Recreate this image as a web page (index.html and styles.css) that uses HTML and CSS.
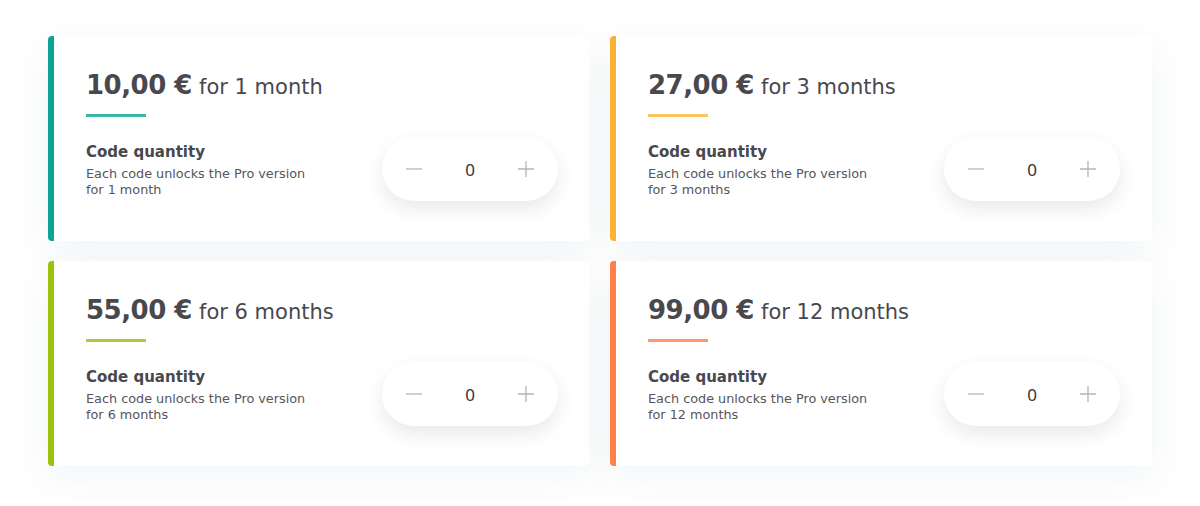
FILE: index.html
```html
<!DOCTYPE html>
<html>
<head>
<meta charset="utf-8">
<link rel="stylesheet" href="styles.css">
</head>
<body>
<div class="grid">
  <div class="card teal">
    <div class="title"><span class="price">10,00 €</span> <span class="period">for 1 month</span></div>
    <div class="bar"></div>
    <div class="row">
      <div class="info">
        <div class="label">Code quantity</div>
        <div class="desc">Each code unlocks the Pro version<br>for 1 month</div>
      </div>
      <div class="stepper">
        <span class="btn"><svg width="16" height="16" viewBox="0 0 16 16"><path d="M0 8H16" stroke="#b5b5b8" stroke-width="1.3"/></svg></span>
        <span class="val">0</span>
        <span class="btn"><svg width="16" height="16" viewBox="0 0 16 16"><path d="M0 8H16M8 0V16" stroke="#b5b5b8" stroke-width="1.3"/></svg></span>
      </div>
    </div>
  </div>
  <div class="card yellow">
    <div class="title"><span class="price">27,00 €</span> <span class="period">for 3 months</span></div>
    <div class="bar"></div>
    <div class="row">
      <div class="info">
        <div class="label">Code quantity</div>
        <div class="desc">Each code unlocks the Pro version<br>for 3 months</div>
      </div>
      <div class="stepper">
        <span class="btn"><svg width="16" height="16" viewBox="0 0 16 16"><path d="M0 8H16" stroke="#b5b5b8" stroke-width="1.3"/></svg></span>
        <span class="val">0</span>
        <span class="btn"><svg width="16" height="16" viewBox="0 0 16 16"><path d="M0 8H16M8 0V16" stroke="#b5b5b8" stroke-width="1.3"/></svg></span>
      </div>
    </div>
  </div>
  <div class="card green">
    <div class="title"><span class="price">55,00 €</span> <span class="period">for 6 months</span></div>
    <div class="bar"></div>
    <div class="row">
      <div class="info">
        <div class="label">Code quantity</div>
        <div class="desc">Each code unlocks the Pro version<br>for 6 months</div>
      </div>
      <div class="stepper">
        <span class="btn"><svg width="16" height="16" viewBox="0 0 16 16"><path d="M0 8H16" stroke="#b5b5b8" stroke-width="1.3"/></svg></span>
        <span class="val">0</span>
        <span class="btn"><svg width="16" height="16" viewBox="0 0 16 16"><path d="M0 8H16M8 0V16" stroke="#b5b5b8" stroke-width="1.3"/></svg></span>
      </div>
    </div>
  </div>
  <div class="card orange">
    <div class="title"><span class="price">99,00 €</span> <span class="period">for 12 months</span></div>
    <div class="bar"></div>
    <div class="row">
      <div class="info">
        <div class="label">Code quantity</div>
        <div class="desc">Each code unlocks the Pro version<br>for 12 months</div>
      </div>
      <div class="stepper">
        <span class="btn"><svg width="16" height="16" viewBox="0 0 16 16"><path d="M0 8H16" stroke="#b5b5b8" stroke-width="1.3"/></svg></span>
        <span class="val">0</span>
        <span class="btn"><svg width="16" height="16" viewBox="0 0 16 16"><path d="M0 8H16M8 0V16" stroke="#b5b5b8" stroke-width="1.3"/></svg></span>
      </div>
    </div>
  </div>
</div>
</body>
</html>
```

FILE: styles.css
```css
html, body {
  margin: 0;
  padding: 0;
  background: #ffffff;
}
body {
  font-family: "DejaVu Sans", "Noto Sans", sans-serif;
  color: #48484d;
}
.grid {
  display: grid;
  grid-template-columns: 542px 542px;
  grid-auto-rows: 205px;
  gap: 20px;
  padding: 36px 48px;
}
.card {
  background: #fff;
  border-radius: 4px;
  border-left: 6px solid #0fa394;
  box-shadow: 0 12px 40px rgba(40, 60, 100, 0.06);
  padding: 32px 32px 0 32px;
  display: flex;
  flex-direction: column;
}
.card.teal { border-left-color: #0fa394; }
.card.yellow { border-left-color: #fbb232; }
.card.green { border-left-color: #9bc30e; }
.card.orange { border-left-color: #ff8147; }
.teal .bar { background: #3cb5a9; }
.yellow .bar { background: #fcc35c; }
.green .bar { background: #a9cb3a; }
.orange .bar { background: #ff976a; }
.title {
  line-height: 34px;
  white-space: nowrap;
}
.price {
  font-size: 26px;
  font-weight: 700;
  letter-spacing: -0.5px;
}
.period {
  font-size: 21px;
  font-weight: 400;
  margin-left: 2px;
}
.bar {
  width: 60px;
  height: 3px;
  margin-top: 8px;
}
.row {
  display: flex;
  justify-content: space-between;
  align-items: center;
  margin-top: 20px;
}
.info {
  padding-top: 2px;
}
.label {
  font-size: 15px;
  font-weight: 700;
  line-height: 20px;
}
.desc {
  font-size: 12.8px;
  line-height: 16px;
  margin-top: 4px;
  color: #55555a;
}
.stepper {
  width: 176px;
  height: 64px;
  border-radius: 32px;
  background: #fff;
  box-shadow: 0 8px 20px rgba(0, 0, 0, 0.09);
  display: flex;
  align-items: center;
  justify-content: space-between;
  padding: 0 24px;
  box-sizing: border-box;
}
.btn {
  width: 16px;
  height: 16px;
  display: flex;
}
.val {
  font-family: "Noto Sans", sans-serif;
  font-size: 17px;
  color: #333;
}
```
